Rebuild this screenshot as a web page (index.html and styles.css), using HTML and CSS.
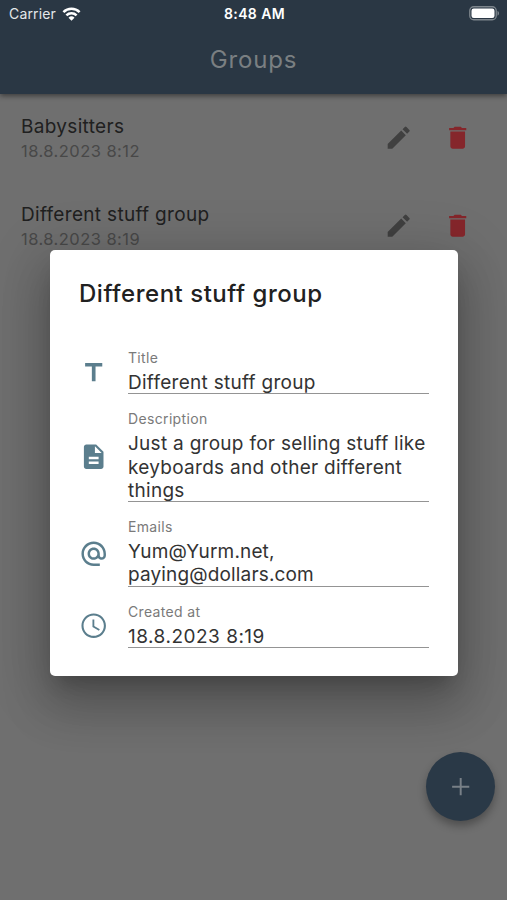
FILE: index.html
```html
<!DOCTYPE html>
<html lang="en">
<head>
<meta charset="utf-8">
<title>Groups</title>
<link rel="stylesheet" href="styles.css">
</head>
<body>
<svg width="0" height="0" class="defs" aria-hidden="true">
  <symbol id="pencil" viewBox="0 0 24 24"><path d="M3 17.250V21h3.750L17.810 9.940l-3.750-3.750L3 17.250zM20.710 7.040a1 1 0 0 0 0-1.410l-2.340-2.340a1 1 0 0 0-1.410 0l-1.830 1.830 3.750 3.750 1.830-1.830z"/></symbol>
  <symbol id="trash" viewBox="0 0 24 24"><path d="M6 19c0 1.100.9 2 2 2h8c1.100 0 2-.9 2-2V7H6v12zM19 4h-3.500l-1-1h-5l-1 1H5v2h14V4z"/></symbol>
</svg>
<div class="screen">
  <header class="appbar">
    <div class="status">
      <div class="carrier"><span>Carrier</span>
        <svg class="wifi" viewBox="0 0 18 14"><g fill="none" stroke="#fff" stroke-width="2.500"><path d="M.9 5.100a11.500 11.500 0 0 1 16.200 0"/><path d="M3.900 8.400a7.200 7.200 0 0 1 10.200 0"/></g><path fill="#fff" d="M6 10.700a4.300 4.300 0 0 1 6 0l-3 3z"/></svg>
      </div>
      <div class="time">8:48 AM</div>
      <svg class="battery" viewBox="0 0 31 15"><rect x=".75" y=".75" width="26.500" height="13" rx="4" fill="none" stroke="#7d858c" stroke-width="1.300"/><rect x="2.500" y="2.500" width="23" height="9.500" rx="2.200" fill="#fff"/><path d="M28.500 5c2 .7 2 4 0 4.700z" fill="#7d858c"/></svg>
    </div>
    <h1>Groups</h1>
  </header>
  <main class="list">
    <div class="item">
      <div class="info"><div class="name">Babysitters</div><div class="date">18.8.2023 8:12</div></div>
      <svg class="icon edit"><use href="#pencil"/></svg><svg class="icon del"><use href="#trash"/></svg>
    </div>
    <div class="item">
      <div class="info"><div class="name">Different stuff group</div><div class="date">18.8.2023 8:19</div></div>
      <svg class="icon edit"><use href="#pencil"/></svg><svg class="icon del"><use href="#trash"/></svg>
    </div>
  </main>
  <button class="fab" aria-label="Add"><svg class="icon" viewBox="0 0 24 24"><path d="M19 12.800h-6.200V19h-1.600v-6.200H5v-1.600h6.200V5h1.600v6.200H19z"/></svg></button>
  <section class="dialog">
    <h2>Different stuff group</h2>
    <div class="row">
      <svg class="icon" viewBox="0 0 24 24"><path d="M5 4v3h5.500v12h3V7H19V4z"/></svg>
      <div class="field"><label>Title</label><p>Different stuff group</p></div>
    </div>
    <div class="row">
      <svg class="icon" viewBox="0 0 24 24"><path d="M14 2H6c-1.100 0-2 .9-2 2v16c0 1.100.9 2 2 2h12c1.100 0 2-.9 2-2V8l-6-6zm2 16H8v-2h8v2zm0-4H8v-2h8v2zm-3-5V3.500L18.500 9H13z"/></svg>
      <div class="field"><label>Description</label><p>Just a group for selling stuff like<br>keyboards and other different<br>things</p></div>
    </div>
    <div class="row">
      <svg class="icon" viewBox="0 0 24 24"><path d="M12 2C6.480 2 2 6.480 2 12s4.480 10 10 10h5v-2h-5c-4.340 0-8-3.660-8-8s3.660-8 8-8 8 3.660 8 8v1.430c0 .79-.71 1.570-1.500 1.570s-1.500-.78-1.500-1.570V12c0-2.760-2.240-5-5-5s-5 2.240-5 5 2.240 5 5 5c1.380 0 2.640-.56 3.540-1.470.65.89 1.770 1.470 2.960 1.470 1.970 0 3.500-1.600 3.500-3.570V12c0-5.520-4.480-10-10-10zm0 13c-1.660 0-3-1.340-3-3s1.340-3 3-3 3 1.340 3 3-1.340 3-3 3z"/></svg>
      <div class="field"><label>Emails</label><p class="emails">Yum@Yurm.net,<br>paying@dollars.com</p></div>
    </div>
    <div class="row">
      <svg class="icon" viewBox="0 0 24 24"><path d="M11.990 2C6.470 2 2 6.480 2 12s4.470 10 9.990 10C17.520 22 22 17.520 22 12S17.520 2 11.990 2zM12 20.300c-4.580 0-8.300-3.720-8.300-8.300s3.720-8.300 8.300-8.300 8.300 3.720 8.300 8.300-3.720 8.300-8.300 8.300zm.5-13.300H11v6l5.250 3.150.75-1.230-4.500-2.670z"/></svg>
      <div class="field"><label>Created at</label><p class="created">18.8.2023 8:19</p></div>
    </div>
  </section>
</div>
</body>
</html>
```
FILE: styles.css
```css
* { box-sizing: border-box; margin: 0; padding: 0; }
body { font-family: Inter, "Liberation Sans", sans-serif; }
.defs { position: absolute; }
.screen { position: relative; height: 900px; background: #6f6f6f; overflow: hidden; }
.icon { width: 29.4px; height: 29.4px; fill: currentColor; flex: none; display: block; }
.appbar { height: 94px; background: #2a3744; box-shadow: 0 2px 5px rgba(0,0,0,.45); }
.status { height: 27px; padding: 0 7px 0 9px; display: grid; grid-template-columns: 1fr auto 1fr; align-items: center; color: #fff; }
.carrier { display: flex; align-items: center; gap: 6px; font-size: 14px; letter-spacing: .15px; color: #e4e7ea; }
.wifi { width: 19px; height: 14px; }
.time { font-size: 14px; font-weight: 600; letter-spacing: .4px; }
.battery { width: 31px; height: 15px; justify-self: end; }
h1 { font-size: 24px; line-height: 66px; font-weight: 400; text-align: center; color: #7a7f82; letter-spacing: .8px; }
.item { height: 88px; padding: 1px 34.5px 0 21px; display: flex; align-items: center; }
.info { flex: 1; }
.name { font-size: 19px; line-height: 26px; letter-spacing: .32px; color: #202020; }
.date { font-size: 16.5px; line-height: 24px; letter-spacing: .45px; color: #484848; margin-top: -1px; margin-bottom: 1px; }
.item .icon { margin-top: -1px; }
.item .edit { color: #404040; margin-right: 29.5px; }
.del { color: #85262b; }
.fab { position: absolute; left: 426px; top: 752px; width: 69px; height: 69px; border: 0; border-radius: 50%; background: #2a3947; color: #788087; display: grid; place-items: center; box-shadow: 0 5px 8px rgba(0,0,0,.3); }
.dialog { position: absolute; left: 50px; top: 250px; width: 408px; height: 426px; padding: 29px 29px 0; background: #fff; border-radius: 5px; box-shadow: 0 13px 18px -8px rgba(0,0,0,.2), 0 29px 46px 4px rgba(0,0,0,.18), 0 11px 56px 10px rgba(0,0,0,.14); }
h2 { font-size: 24px; line-height: 30px; font-weight: 500; color: #212121; letter-spacing: .52px; margin-bottom: 39px; }
.row { display: flex; align-items: center; gap: 19.6px; color: #5b7e8d; margin-bottom: 15px; }
.row .icon { margin-top: 3px; }
.field { flex: 1; border-bottom: 1px solid #949494; }
label { display: block; font-size: 14px; line-height: 20px; letter-spacing: .35px; color: #7a7a7a; margin-bottom: 3px; }
.field p { font-size: 19px; line-height: 23.25px; letter-spacing: .28px; color: #333; white-space: nowrap; margin-bottom: -1px; }
.field .emails { letter-spacing: .15px; }
.field .created { letter-spacing: .5px; }
```
